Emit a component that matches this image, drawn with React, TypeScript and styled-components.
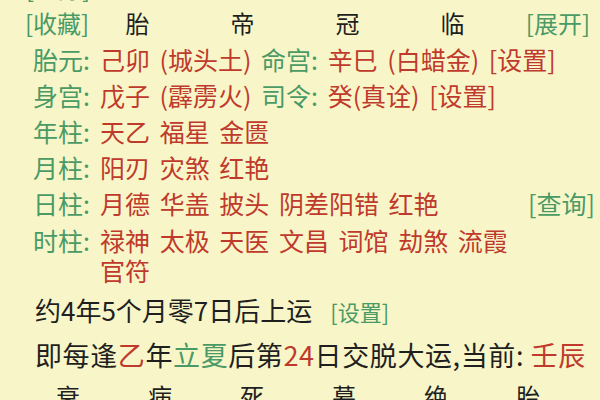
import React from "react";
import styled, { createGlobalStyle } from "styled-components";

const GREEN = "#4a9a66";
const RED = "#bf3a2c";
const INK = "#1f1f1f";
const BG = "#f8f6c8";

const Global = createGlobalStyle`
  html, body {
    margin: 0;
    padding: 0;
    background: ${BG};
    overflow: hidden;
  }
  body {
    font-family: "Noto Sans CJK SC", "Noto Sans", sans-serif;
    color: ${INK};
  }
`;

const Page = styled.div`
  width: 600px;
  height: 400px;
  overflow: hidden;
  background: ${BG};
`;

const Inner = styled.div`
  margin-top: -29px;
  display: flex;
  flex-direction: column;
`;

const Link = styled.span<{ $tone?: "green" | "red" }>`
  color: ${(p) => (p.$tone === "red" ? RED : GREEN)};
  white-space: nowrap;
`;

const Red = styled.span`
  color: ${RED};
`;

const Green = styled.span`
  color: ${GREEN};
`;

const CutRow = styled.div`
  height: 34px;
  line-height: 34px;
  font-size: 24px;
  padding-left: 26px;
`;

const StageRow = styled.div`
  display: grid;
  grid-template-columns: 60px repeat(4, 105px) 1fr;
  align-items: center;
  height: 36px;
  line-height: 36px;
  font-size: 24px;
  padding: 0 10px 0 25px;
`;

const Stage = styled.span`
  text-align: center;
  color: ${INK};
`;

const StageEnd = styled.span`
  justify-self: end;
`;

const InfoRow = styled.div<{ $top?: number; $lh?: number }>`
  display: flex;
  align-items: flex-start;
  font-size: 25px;
  line-height: ${(p) => p.$lh ?? 36}px;
  padding: ${(p) => p.$top ?? 0}px 10px 0 33px;
`;

const Label = styled.span`
  color: ${GREEN};
  width: 67px;
  flex-shrink: 0;
  white-space: nowrap;
`;

const Value = styled.span`
  flex: 1;
  color: ${RED};
  word-spacing: 4px;
`;

const Word = styled.span`
  white-space: nowrap;
`;

const Action = styled.span`
  width: 62px;
  flex-shrink: 0;
  text-align: right;
`;

const Sentence = styled.div<{ $lh: number; $size: number; $track?: number }>`
  font-size: ${(p) => p.$size}px;
  line-height: ${(p) => p.$lh}px;
  letter-spacing: ${(p) => p.$track ?? 0}px;
  padding-left: 35px;
  color: ${INK};
  white-space: nowrap;
`;

const SmallLink = styled.span`
  color: ${GREEN};
  font-size: 22px;
  margin-left: 18px;
`;

const BottomRow = styled.div`
  display: grid;
  grid-template-columns: repeat(6, 92px);
  font-size: 24px;
  line-height: 44px;
  padding-left: 22px;
`;

const stagesTop = ["胎", "帝", "冠", "临"];
const stagesBottom = ["衰", "病", "死", "墓", "绝", "胎"];

function Words({ items }: { items: string[] }) {
  return (
    <>
      {items.map((w, i) => (
        <React.Fragment key={i}>
          {i > 0 ? " " : null}
          <Word>{w}</Word>
        </React.Fragment>
      ))}
    </>
  );
}

export default function App() {
  return (
    <Page>
      <Global />
      <Inner>
        <CutRow>
          <Link>[手除]</Link>
        </CutRow>
        <StageRow>
          <Link>[收藏]</Link>
          {stagesTop.map((s) => (
            <Stage key={s}>{s}</Stage>
          ))}
          <StageEnd>
            <Link>[展开]</Link>
          </StageEnd>
        </StageRow>
        <InfoRow>
          <Label>胎元:</Label>
          <Value>
            己卯 (城头土) <Green>命宫:</Green> 辛巳 (白蜡金) <Link $tone="red">[设置]</Link>
          </Value>
        </InfoRow>
        <InfoRow>
          <Label>身宫:</Label>
          <Value>
            戊子 (霹雳火) <Green>司令:</Green> 癸(真诠) <Link $tone="red">[设置]</Link>
          </Value>
        </InfoRow>
        <InfoRow>
          <Label>年柱:</Label>
          <Value>
            <Words items={["天乙", "福星", "金匮"]} />
          </Value>
        </InfoRow>
        <InfoRow>
          <Label>月柱:</Label>
          <Value>
            <Words items={["阳刃", "灾煞", "红艳"]} />
          </Value>
        </InfoRow>
        <InfoRow>
          <Label>日柱:</Label>
          <Value>
            <Words items={["月德", "华盖", "披头", "阴差阳错", "红艳"]} />
          </Value>
          <Action>
            <Link>[查询]</Link>
          </Action>
        </InfoRow>
        <InfoRow $top={4} $lh={30}>
          <Label>时柱:</Label>
          <Value>
            <Words items={["禄神", "太极", "天医", "文昌", "词馆", "劫煞", "流霞", "官符"]} />
          </Value>
          <Action />
        </InfoRow>
        <Sentence $size={26} $lh={50}>
          约4年5个月零7日后上运<SmallLink>[设置]</SmallLink>
        </Sentence>
        <Sentence $size={27} $lh={38} $track={0.6}>
          即每逢<Red>乙</Red>年<Green>立夏</Green>后第<Red>24</Red>日交脱大运,当前: <Red>壬辰</Red>
        </Sentence>
        <BottomRow>
          {stagesBottom.map((s, i) => (
            <Stage key={i}>{s}</Stage>
          ))}
        </BottomRow>
      </Inner>
    </Page>
  );
}
